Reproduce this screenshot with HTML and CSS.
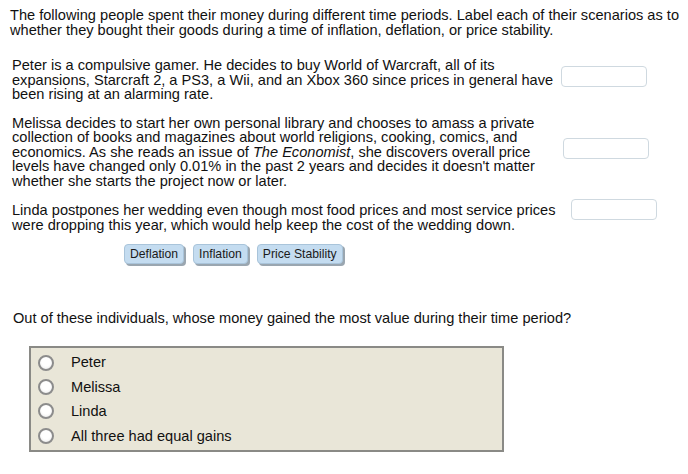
FILE: index.html
```html
<!DOCTYPE html>
<html>
<head>
<meta charset="utf-8">
<link rel="stylesheet" href="styles.css">
</head>
<body>
<div class="page">
  <p class="intro">The following people spent their money during different time periods. Label each of their scenarios as to whether they bought their goods during a time of inflation, deflation, or price stability.</p>

  <div class="scenario scenario-peter">
    <p class="text">Peter is a compulsive gamer. He decides to buy World of Warcraft, all of its expansions, Starcraft 2, a PS3, a Wii, and an Xbox 360 since prices in general have been rising at an alarming rate.</p>
    <div class="drop"></div>
  </div>

  <div class="scenario scenario-melissa">
    <p class="text">Melissa decides to start her own personal library and chooses to amass a private collection of books and magazines about world religions, cooking, comics, and economics. As she reads an issue of <em>The Economist</em>, she discovers overall price levels have changed only 0.01% in the past 2 years and decides it doesn't matter whether she starts the project now or later.</p>
    <div class="drop"></div>
  </div>

  <div class="scenario scenario-linda">
    <p class="text">Linda postpones her wedding even though most food prices and most service prices were dropping this year, which would help keep the cost of the wedding down.</p>
    <div class="drop"></div>
  </div>

  <div class="chips">
    <span class="chip">Deflation</span>
    <span class="chip">Inflation</span>
    <span class="chip">Price Stability</span>
  </div>

  <p class="question">Out of these individuals, whose money gained the most value during their time period?</p>

  <div class="choices">
    <label class="choice"><span class="radio"></span><span>Peter</span></label>
    <label class="choice"><span class="radio"></span><span>Melissa</span></label>
    <label class="choice"><span class="radio"></span><span>Linda</span></label>
    <label class="choice"><span class="radio"></span><span>All three had equal gains</span></label>
  </div>
</div>
</body>
</html>
```

FILE: styles.css
```css
html, body {
  margin: 0;
  padding: 0;
  background: #ffffff;
}

body {
  font-family: "Liberation Sans", Arial, sans-serif;
  font-size: 14.6px;
  line-height: 14.5px;
  color: #111111;
}

p {
  margin: 0;
}

.page {
  padding: 8px 0 0 10px;
  width: 678px;
}

.intro {
  width: 676px;
}

.scenario {
  display: flex;
  align-items: flex-start;
  margin-left: 2px;
}

.scenario .text {
  width: 548px;
}

.scenario-peter {
  margin-top: 21px;
}

.scenario-melissa {
  margin-top: 14px;
}

.scenario-linda {
  margin-top: 15px;
}

.drop {
  width: 84px;
  height: 19px;
  border: 1px solid #cfd9e0;
  border-radius: 4px;
  background: #ffffff;
  flex: none;
}

.scenario-peter .drop {
  margin-left: 1px;
  margin-top: 8px;
}

.scenario-melissa .drop {
  margin-left: 3px;
  margin-top: 22px;
}

.scenario-linda .drop {
  margin-left: 11px;
  margin-top: -4px;
}

.chips {
  display: flex;
  gap: 9px;
  margin: 12px 0 0 114px;
}

.chip {
  display: inline-block;
  height: 18px;
  line-height: 18px;
  padding: 0 5px;
  font-size: 12.2px;
  color: #1a1a1a;
  background: #c4dcf0;
  border: 1px solid #a9c4da;
  border-radius: 4px;
  box-shadow: 2px 2px 0 #9aa6b0;
}

.question {
  margin: 47px 0 0 3px;
}

.choices {
  margin: 20px 0 0 19px;
  width: 471px;
  height: 99px;
  padding-top: 3px;
  background: #e9e6d8;
  border: 2px solid #8a8a86;
  display: flex;
  flex-direction: column;
}

.choice {
  display: flex;
  align-items: center;
  height: 24.4px;
}

.radio {
  width: 12px;
  height: 12px;
  border-radius: 50%;
  border: 2px solid #8c8c8c;
  background: radial-gradient(circle at 50% 40%, #ffffff 45%, #e6e6e6 100%);
  margin: 0 17px 0 7px;
  flex: none;
}
```
